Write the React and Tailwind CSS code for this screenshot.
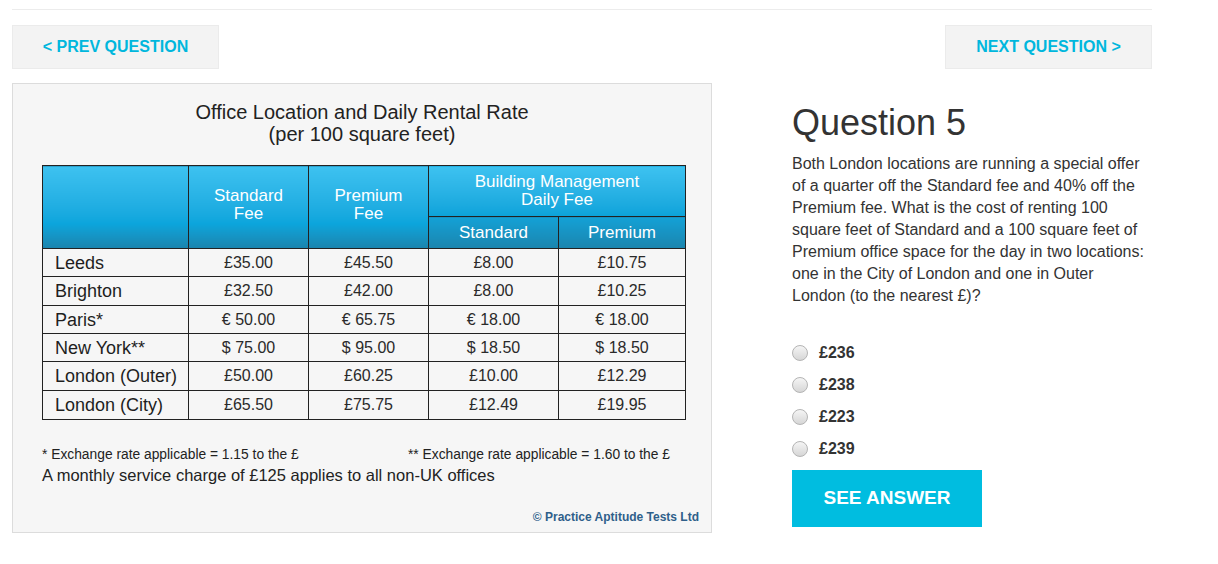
import React from "react";

const rows = [
  ["Leeds", "£35.00", "£45.50", "£8.00", "£10.75", "h-[28px]"],
  ["Brighton", "£32.50", "£42.00", "£8.00", "£10.25", "h-[29px]"],
  ["Paris*", "€ 50.00", "€ 65.75", "€ 18.00", "€ 18.00", "h-[28px]"],
  ["New York**", "$ 75.00", "$ 95.00", "$ 18.50", "$ 18.50", "h-[28px]"],
  ["London (Outer)", "£50.00", "£60.25", "£10.00", "£12.29", "h-[29px]"],
  ["London (City)", "£65.50", "£75.75", "£12.49", "£19.95", "h-[29px]"],
];

const options = ["£236", "£238", "£223", "£239"];

export default function App() {
  return (
    <div className="w-[1218px] h-[564px] bg-white font-['Liberation_Sans',Arial,sans-serif]">
      <div className="ml-[12px] w-[1140px] pt-[9px]">
        <div className="border-t border-[#ececec]" />
        <div className="mt-[15px] flex justify-between">
          <button className="h-[44px] w-[207px] bg-[#f3f3f3] border border-[#ebebeb] text-[#00b7dd] font-bold text-[16px]">
            &lt; PREV QUESTION
          </button>
          <button className="h-[44px] w-[207px] bg-[#f3f3f3] border border-[#ebebeb] text-[#00b7dd] font-bold text-[16px]">
            NEXT QUESTION &gt;
          </button>
        </div>

        <div className="mt-[14px] flex items-start">
          {/* Chart panel */}
          <div className="w-[700px] h-[450px] bg-[#f6f6f6] border border-[#dcdcdc] pt-[17px]">
            <div className="text-center text-[20px] leading-[22px] text-[#222]">
              <div>Office Location and Daily Rental Rate</div>
              <div>(per 100 square feet)</div>
            </div>
            <table className="ml-[29px] mt-[20px] w-[643px] table-fixed border-collapse border border-[#111]">
              <colgroup>
                <col className="w-[146px]" />
                <col className="w-[120px]" />
                <col className="w-[120px]" />
                <col className="w-[130px]" />
                <col className="w-[127px]" />
              </colgroup>
              <thead>
                <tr className="h-[51px]">
                  <th rowSpan={2} className="border border-[#222] bg-linear-to-b from-[#3dc2f0] via-[#0ba5dc] via-70% to-[#1a84ad]" />
                  <th rowSpan={2} className="border border-[#222] bg-linear-to-b from-[#3dc2f0] via-[#0ba5dc] via-70% to-[#1a84ad] font-normal text-white text-[17px] leading-[18px] pb-[4px]">
                    Standard<br />Fee
                  </th>
                  <th rowSpan={2} className="border border-[#222] bg-linear-to-b from-[#3dc2f0] via-[#0ba5dc] via-70% to-[#1a84ad] font-normal text-white text-[17px] leading-[18px] pb-[4px]">
                    Premium<br />Fee
                  </th>
                  <th colSpan={2} className="border border-[#222] bg-linear-to-b from-[#3dc2f0] to-[#0aa3da] font-normal text-white text-[17px] leading-[18px]">
                    Building Management<br />Daily Fee
                  </th>
                </tr>
                <tr className="h-[32px]">
                  <th className="border border-[#222] bg-linear-to-b from-[#13a1d6] to-[#1a85ae] font-normal text-white text-[17px]">
                    Standard
                  </th>
                  <th className="border border-[#222] bg-linear-to-b from-[#13a1d6] to-[#1a85ae] font-normal text-white text-[17px]">
                    Premium
                  </th>
                </tr>
              </thead>
              <tbody>
                {rows.map((r) => (
                  <tr key={r[0]} className={r[5]}>
                    <td className="border border-[#222] pl-[12px] text-[18px] leading-[20px] text-[#1e1e1e] whitespace-nowrap">
                      {r[0]}
                    </td>
                    {r.slice(1, 5).map((v, i) => (
                      <td key={i} className="border border-[#222] text-center text-[16px] leading-[18px] text-[#2a2a2a]">
                        {v}
                      </td>
                    ))}
                  </tr>
                ))}
              </tbody>
            </table>
            <div className="ml-[29px] mt-[27px] text-[#222]">
              <div className="flex text-[13.8px] leading-[16px]">
                <span className="w-[366px]">* Exchange rate applicable = 1.15 to the £</span>
                <span>** Exchange rate applicable = 1.60 to the £</span>
              </div>
              <div className="mt-[2px] text-[16.5px] leading-[20px]">
                A monthly service charge of £125 applies to all non-UK offices
              </div>
            </div>
            <div className="mt-[25px] pr-[12px] text-right text-[12px] leading-[14px] font-bold text-[#2f5f8a]">
              © Practice Aptitude Tests Ltd
            </div>
          </div>

          {/* Question column */}
          <div className="ml-[80px] w-[355px]">
            <h1 className="mt-[20px] text-[36px] leading-[40px] text-[#333]">Question 5</h1>
            <p className="mt-[10px] text-[16px] leading-[22px] text-[#333]">
              Both London locations are running a special offer of a quarter off the Standard fee and 40% off the
              Premium fee. What is the cost of renting 100 square feet of Standard and a 100 square feet of Premium
              office space for the day in two locations: one in the City of London and one in Outer London (to the
              nearest £)?
            </p>
            <div className="mt-[30px] flex flex-col">
              {options.map((o) => (
                <label key={o} className="h-[32px] flex items-center gap-[11px]">
                  <span className="w-[16px] h-[16px] rounded-full border border-[#b4b4b4] bg-linear-to-b from-[#f5f5f5] to-[#d6d6d6]" />
                  <span className="font-bold text-[16px] text-[#333]">{o}</span>
                </label>
              ))}
            </div>
            <button className="mt-[5px] w-[190px] h-[57px] bg-[#00bde0] text-white font-bold text-[19px]">
              SEE ANSWER
            </button>
          </div>
        </div>
      </div>
    </div>
  );
}
